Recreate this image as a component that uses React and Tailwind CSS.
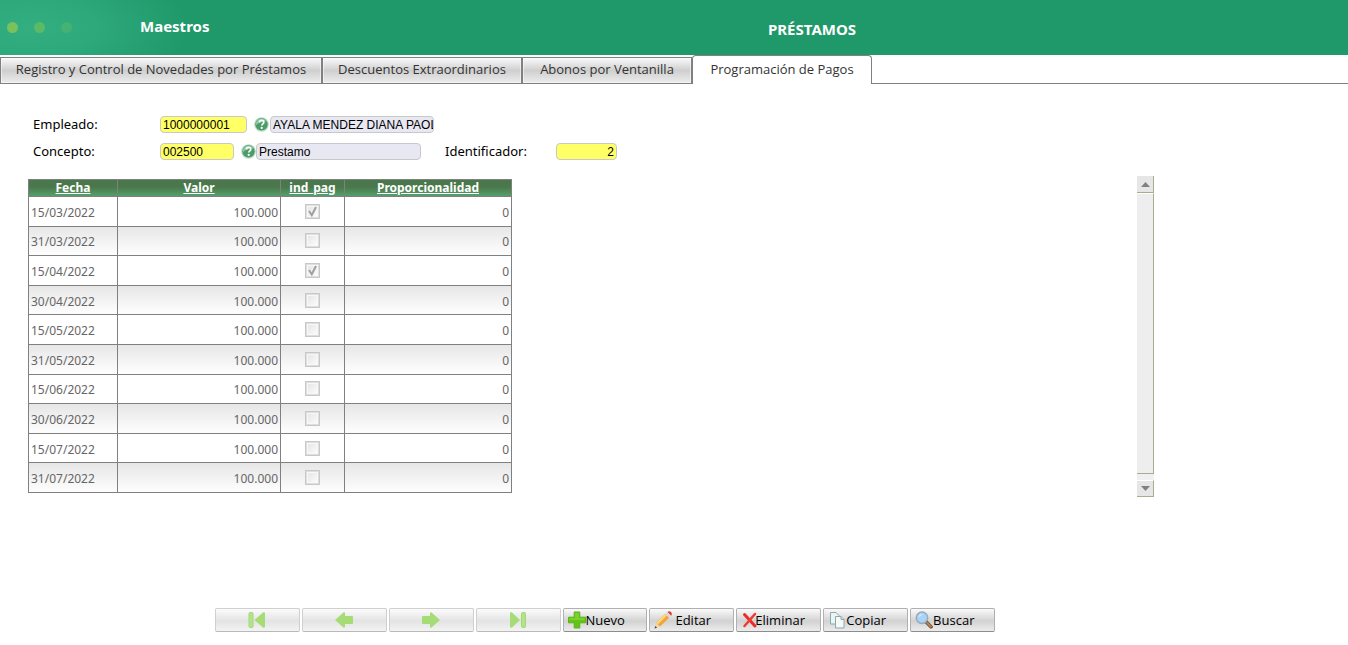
import { useState } from "react";
import clsx from "clsx";

const tabs = [
  { label: "Registro y Control de Novedades por Préstamos", width: "w-[322px]" },
  { label: "Descuentos Extraordinarios", width: "w-[200px]" },
  { label: "Abonos por Ventanilla", width: "w-[170px]" },
  { label: "Programación de Pagos", width: "w-[180px]" },
];

const payments = [
  { date: "15/03/2022", value: "100.000", paid: true, ratio: 0 },
  { date: "31/03/2022", value: "100.000", paid: false, ratio: 0 },
  { date: "15/04/2022", value: "100.000", paid: true, ratio: 0 },
  { date: "30/04/2022", value: "100.000", paid: false, ratio: 0 },
  { date: "15/05/2022", value: "100.000", paid: false, ratio: 0 },
  { date: "31/05/2022", value: "100.000", paid: false, ratio: 0 },
  { date: "15/06/2022", value: "100.000", paid: false, ratio: 0 },
  { date: "30/06/2022", value: "100.000", paid: false, ratio: 0 },
  { date: "15/07/2022", value: "100.000", paid: false, ratio: 0 },
  { date: "31/07/2022", value: "100.000", paid: false, ratio: 0 },
];

function Header() {
  return (
    <header className="flex h-[55px] items-center bg-[#1f996a] bg-[radial-gradient(ellipse_160px_70px_at_30px_28px,#33ae80_0%,#2ea97b_40%,#1f996a_100%)] text-white">
      <div className="flex w-[276px] shrink-0 items-center pl-[7px]">
        <span className="size-[11px] rounded-full bg-[#79c25b]" />
        <span className="ml-4 size-[11px] rounded-full bg-[#5cb966]" />
        <span className="ml-4 size-[11px] rounded-full bg-[#43b272]" />
        <span className="ml-[68px] pb-1 text-[15px] leading-5 font-bold">Maestros</span>
      </div>
      <h1 className="flex-1 pt-0.5 text-center text-[15px] leading-5 font-bold">PRÉSTAMOS</h1>
    </header>
  );
}

function TabBar({ active, onChange }) {
  return (
    <div role="tablist" className="flex h-[29px] items-end">
      {tabs.map((tab, i) => (
        <button
          key={tab.label}
          type="button"
          role="tab"
          aria-selected={i === active}
          onClick={() => onChange(i)}
          className={clsx(
            "shrink-0 border-[#808080] font-['Open_Sans','Noto_Sans',sans-serif] text-[13px] leading-4 whitespace-nowrap text-[#333]",
            tab.width,
            i === active
              ? "h-[29px] rounded-t-sm border-t border-r border-l bg-white pb-0.5"
              : "h-[27px] border bg-linear-to-b from-[#fafafa] from-0% via-[#cfcfcf] via-50% to-[#ececec] to-100% pb-[3px] shadow-[inset_0_0_0_1px_#ffffff80]"
          )}
        >
          {tab.label}
        </button>
      ))}
      <div className="flex-1 self-stretch border-b border-[#808080]" />
    </div>
  );
}

function HelpButton() {
  return (
    <button type="button" aria-label="Ayuda" className="ml-[7px] size-[15px]">
      <svg viewBox="0 0 15 15" className="size-[15px]">
        <circle cx="7.5" cy="7.5" r="7.3" fill="#b9dcc5" />
        <circle cx="7.5" cy="7.3" r="6.2" fill="#4c9c69" />
        <path d="M1.800 8.500C1.400 4 4.600 1.300 8 1.500c2 .2 3.700 1.500 4.400 3.200-3-.5-7.300.3-10.600 3.800z" fill="#8dc8a2" />
        <path
          d="M5.300 5.400C5.500 3.900 6.500 3.300 7.600 3.300c1.300 0 2.200.8 2.200 1.900 0 1.600-2 1.700-2 3.300"
          fill="none"
          stroke="#fff"
          strokeWidth="1.700"
        />
        <circle cx="7.700" cy="10.900" r="1.100" fill="#fff" />
      </svg>
    </button>
  );
}

function Field({ id, value, readOnly, className, ...rest }) {
  return (
    <input
      id={id}
      defaultValue={value}
      readOnly={readOnly}
      className={clsx(
        "h-[17px] rounded-sm border border-[#c8c8c8] pl-0.5 font-['Liberation_Sans',Arial,sans-serif] text-[12px] leading-[15px] text-black outline-none",
        readOnly ? "bg-[#e8e8f2] pr-0" : "bg-[#ffff66] pr-0.5",
        className
      )}
      {...rest}
    />
  );
}

function LoanForm() {
  return (
    <form className="flex flex-col gap-[10px] pt-8 pl-[33px] text-[13px] leading-[17px] text-black">
      <div className="flex items-center">
        <label htmlFor="empleado" className="w-[127px]">Empleado:</label>
        <Field id="empleado" value="1000000001" className="w-[87px]" />
        <HelpButton />
        <Field
          id="empleadoNombre"
          aria-label="Nombre del empleado"
          value="AYALA MENDEZ DIANA PAOLA"
          readOnly
          className="ml-px w-[164px]"
        />
      </div>
      <div className="flex items-center">
        <label htmlFor="concepto" className="w-[127px]">Concepto:</label>
        <Field id="concepto" value="002500" className="w-[74px]" />
        <HelpButton />
        <Field
          id="conceptoNombre"
          aria-label="Nombre del concepto"
          value="Prestamo"
          readOnly
          className="w-[165px]"
        />
        <label htmlFor="identificador" className="ml-6 w-[111px]">Identificador:</label>
        <Field id="identificador" value="2" className="w-[61px] text-right" />
      </div>
    </form>
  );
}

function PaidCheckbox({ checked, label }) {
  return (
    <span className="relative mx-auto block size-[15px]">
      <input
        type="checkbox"
        disabled
        checked={checked}
        readOnly
        aria-label={label}
        className="block size-[15px] appearance-none border border-[#c8c8c8] bg-linear-to-br from-[#e2e2e2] to-white shadow-[inset_0_0_0_1px_#dedede,inset_0_0_0_2px_#f8f8f8]"
      />
      {checked && (
        <svg viewBox="0 0 15 15" className="pointer-events-none absolute inset-0 size-[15px]">
          <path d="M4 7L6.800 11.200L11 3" fill="none" stroke="#a0a0a0" strokeWidth="2" />
        </svg>
      )}
    </span>
  );
}

function PaymentsTable() {
  return (
    <table className="mt-[3px] h-[314px] w-[484px] table-fixed border-collapse text-[12px] leading-4 text-[#666]">
      <thead>
        <tr className="h-[17px] bg-linear-to-b from-[#4a774b] from-40% to-[#55a56f] text-white underline">
          <th className="w-[89px] border border-[#808080] p-0 leading-4">Fecha</th>
          <th className="w-[163px] border border-[#808080] p-0 leading-4">Valor</th>
          <th className="w-[64px] border border-[#808080] p-0 leading-4">ind_pag</th>
          <th className="border border-[#808080] p-0 leading-4">Proporcionalidad</th>
        </tr>
      </thead>
      <tbody>
        {payments.map((row) => (
          <tr key={row.date} className="even:bg-linear-to-b even:from-[#e6e6e6] even:to-white">
            <td className="border border-[#808080] px-0.5 pt-[3px] pb-0">{row.date}</td>
            <td className="border border-[#808080] px-0.5 pt-[3px] pb-0 text-right">{row.value}</td>
            <td className="border border-[#808080] p-0">
              <PaidCheckbox checked={row.paid} label={`Pagado ${row.date}`} />
            </td>
            <td className="border border-[#808080] px-0.5 pt-[3px] pb-0 text-right">{row.ratio}</td>
          </tr>
        ))}
      </tbody>
    </table>
  );
}

function ScrollRail() {
  return (
    <div className="flex h-[321px] w-[17px] flex-col bg-[#f0f0f0]">
      <button
        type="button"
        aria-label="Subir"
        className="flex h-[17px] items-center justify-center border-r border-b border-[#a3b08f] bg-[#e6e6e6]"
      >
        <svg viewBox="0 0 9 5" className="h-[5px] w-[9px]">
          <path d="M0 5L4.500 0L9 5z" fill="#808080" />
        </svg>
      </button>
      <div className="mb-[6px] flex-1 border-t border-r border-b border-t-white border-r-[#a3b08f] border-b-[#a3b08f] bg-[#eee]" />
      <button
        type="button"
        aria-label="Bajar"
        className="flex h-[17px] items-center justify-center border-t border-r border-b border-t-white border-r-[#a3b08f] border-b-[#a3b08f] bg-[#e6e6e6]"
      >
        <svg viewBox="0 0 9 5" className="h-[5px] w-[9px]">
          <path d="M0 0L4.500 5L9 0z" fill="#808080" />
        </svg>
      </button>
    </div>
  );
}

function FirstIcon() {
  return (
    <svg viewBox="0 0 18 18" className="size-[18px]">
      <rect x="1" y="1.500" width="4" height="15" rx="1.200" fill="#86d23a" stroke="#62bf22" />
      <path d="M6.500 9L15 1.500C16 1 17 1.500 17 2.500v13c0 1-1 1.500-2 1z" fill="#6cc61c" />
    </svg>
  );
}

function PrevIcon() {
  return (
    <svg viewBox="0 0 18 18" className="size-[18px]">
      <path d="M0 9L8.500 1.500c.8-.5 1.500 0 1.500 1V5H17c.6 0 1 .4 1 1v6c0 .6-.4 1-1 1h-7v2.500c0 1-.7 1.500-1.500 1z" fill="#6cc61c" />
    </svg>
  );
}

function NextIcon() {
  return (
    <svg viewBox="0 0 18 18" className="size-[18px]">
      <path d="M18 9L9.500 1.500c-.8-.5-1.500 0-1.500 1V5H1c-.6 0-1 .4-1 1v6c0 .6.4 1 1 1h7v2.500c0 1 .7 1.500 1.500 1z" fill="#6cc61c" />
    </svg>
  );
}

function LastIcon() {
  return (
    <svg viewBox="0 0 18 18" className="size-[18px]">
      <path d="M11 9L3 1.500C2 1 1 1.500 1 2.500v13c0 1 1 1.500 2 1z" fill="#6cc61c" />
      <rect x="12.500" y="1.500" width="4" height="15" rx="1.200" fill="#86d23a" stroke="#62bf22" />
    </svg>
  );
}

function AddIcon() {
  return (
    <svg viewBox="0 0 18 18" className="size-[18px]">
      <path d="M6.200 1h5.600v5.200h5.700v5.600h-5.700V17H6.200v-5.200H.5V6.200h5.700z" fill="#63c416" stroke="#5ab51c" strokeLinejoin="round" />
      <path d="M7.200 2h3.600v5.200h5.700v1.800H1.500V7.200h5.700z" fill="#7dd232" />
    </svg>
  );
}

function EditIcon() {
  return (
    <svg viewBox="0 0 18 18" className="size-[18px]">
      <path d="M.5 17.500L2.200 11.800L6 15.600z" fill="#f4d6a8" />
      <path d="M.5 17.500l.8-2.600l1.800 1.800z" fill="#444" />
      <path d="M2.200 11.800L11.300 2.800l3.900 3.900L6 15.600z" fill="#f0a535" />
      <path d="M2.200 11.800L11.300 2.800l1.700 1.700L3.900 13.500z" fill="#fbd47c" />
      <path d="M11.300 2.800l1.700-1.700l3.900 3.900L15.200 6.700z" fill="#d5dbe0" />
      <path d="M13.500 1C14.500-.1 16.100.1 17 1s1.300 2.400.2 3.700z" fill="#dc3c3c" />
    </svg>
  );
}

function DeleteIcon() {
  return (
    <svg viewBox="0 0 12 18" className="h-[18px] w-3 overflow-visible">
      <path d="M1.500 3.500L12 15" stroke="#e82c2c" strokeWidth="3" strokeLinecap="round" />
      <path d="M12 3L1.500 15" stroke="#ef3b36" strokeWidth="2.500" strokeLinecap="round" />
    </svg>
  );
}

function CopyIcon() {
  return (
    <svg viewBox="0 0 18 18" className="size-[18px]">
      <path d="M2.500 1.500H8L11 4.500V13H2.500z" fill="#edf5f4" stroke="#8ba9a9" />
      <path d="M7.500 5.500H13L16 8.500v8.500H7.500z" fill="#f5faf9" stroke="#8ba9a9" />
      <path d="M13 5.500v3h3" fill="#cfe0de" stroke="#8ba9a9" />
    </svg>
  );
}

function SearchIcon() {
  return (
    <svg viewBox="0 0 18 18" className="size-[18px]">
      <path d="M11 10.800L16 15.800" stroke="#6b4a2c" strokeWidth="3.600" strokeLinecap="round" />
      <path d="M12.300 12L15.800 15.500" stroke="#b98550" strokeWidth="2" strokeLinecap="round" />
      <circle cx="7" cy="6.800" r="5.700" fill="#a9d4f5" stroke="#98a9bd" strokeWidth="1.500" />
      <path d="M3.500 6.500C3.800 4 6 2.800 8.500 3.300C6.500 4 5 5 3.500 6.500z" fill="#e9f6ff" />
    </svg>
  );
}

const actions = [
  { name: "Primero", icon: <FirstIcon />, nav: true },
  { name: "Anterior", icon: <PrevIcon />, nav: true },
  { name: "Siguiente", icon: <NextIcon />, nav: true },
  { name: "Último", icon: <LastIcon />, nav: true },
  { name: "Nuevo", icon: <AddIcon /> },
  { name: "Editar", icon: <EditIcon />, gap: "gap-[3px]" },
  { name: "Eliminar", icon: <DeleteIcon />, pad: "pl-1.5" },
  { name: "Copiar", icon: <CopyIcon /> },
  { name: "Buscar", icon: <SearchIcon /> },
];

function Toolbar() {
  return (
    <div className="mt-[111px] ml-[215px] grid w-[780px] grid-cols-9 gap-0.5">
      {actions.map((action) => (
        <button
          key={action.name}
          type="button"
          disabled={action.nav}
          aria-label={action.name}
          className={clsx(
            "flex h-6 items-center rounded-xs border border-[#b0b0b0] border-b-[#8c8c8c] bg-linear-to-b from-[#fafafa] from-0% via-[#d2d2d2] via-55% to-[#ececec] to-100% font-['Open_Sans','Noto_Sans',sans-serif] text-[13px] leading-4 text-black",
            action.nav ? "justify-center opacity-60" : action.pad || "pl-1",
            action.gap
          )}
        >
          {action.icon}
          {!action.nav && <span>{action.name}</span>}
        </button>
      ))}
    </div>
  );
}

export default function App() {
  const [activeTab, setActiveTab] = useState(3);

  return (
    <div className="min-h-screen bg-white font-['Noto_Sans','Open_Sans',sans-serif]">
      <Header />
      <TabBar active={activeTab} onChange={setActiveTab} />
      <main>
        <LoanForm />
        <div className="mt-4 ml-7 flex max-w-[1126px] items-start justify-between">
          <PaymentsTable />
          <ScrollRail />
        </div>
        <Toolbar />
      </main>
    </div>
  );
}
